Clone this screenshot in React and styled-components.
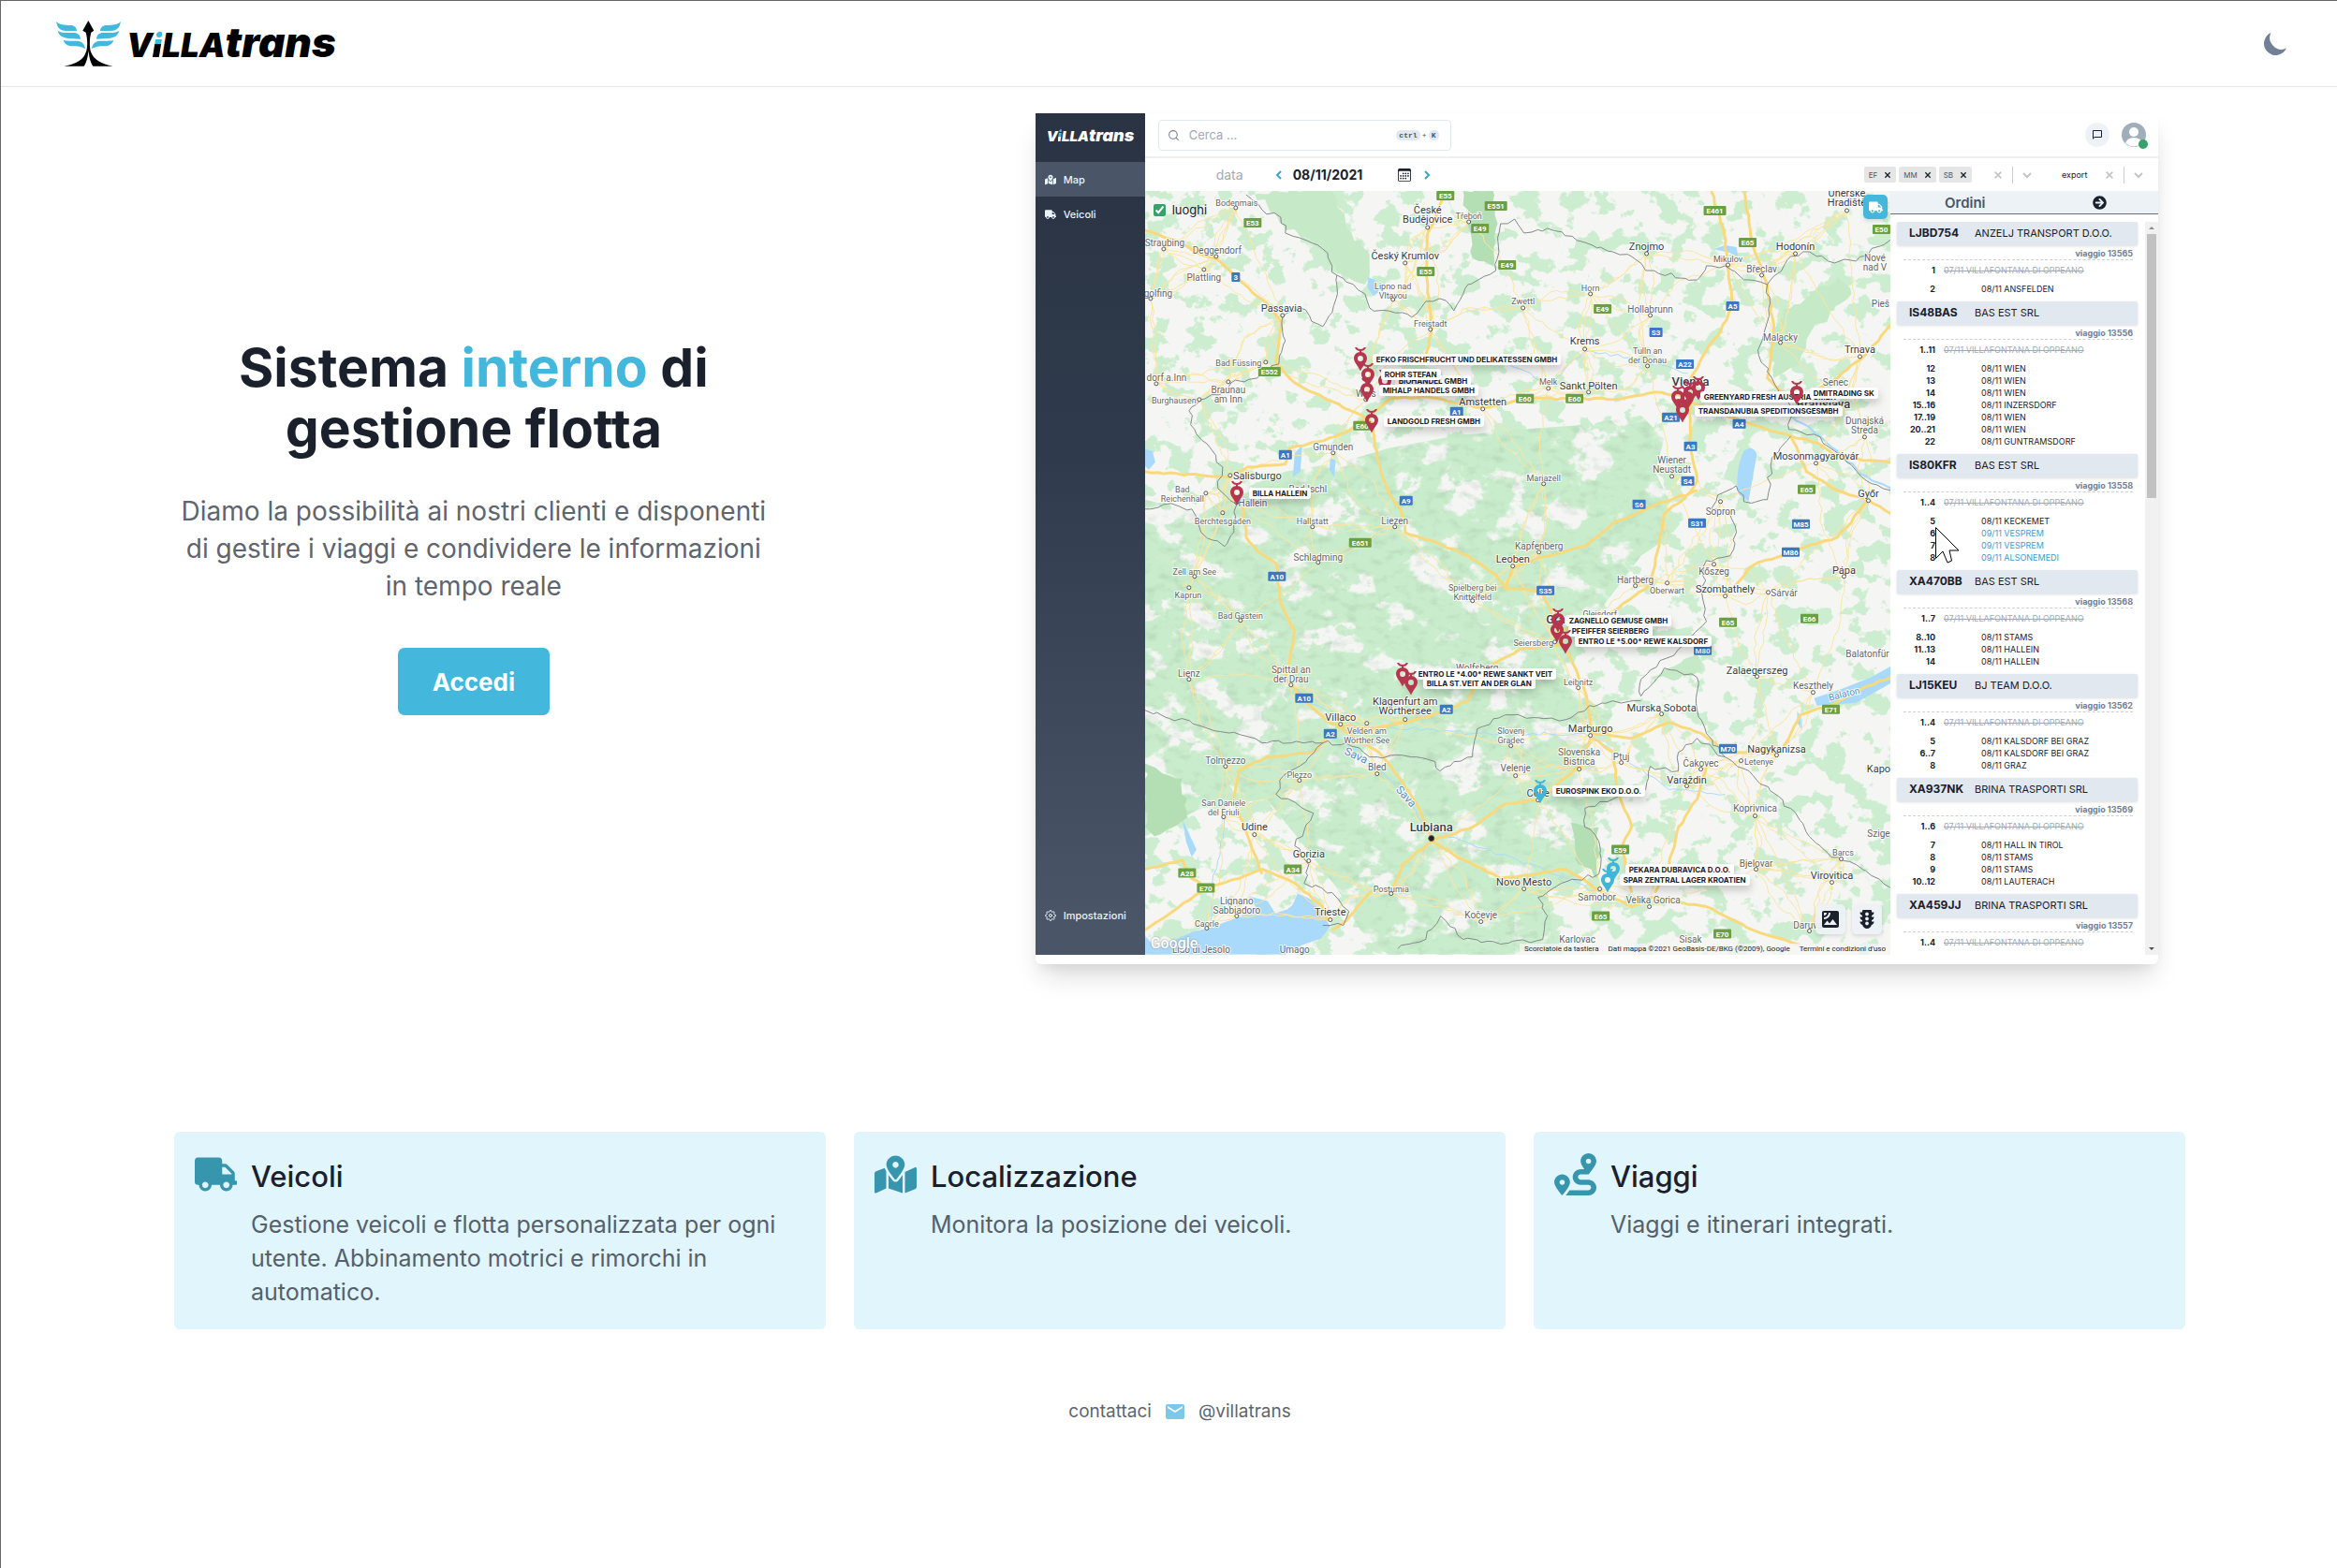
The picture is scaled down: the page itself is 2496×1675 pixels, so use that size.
import React from "react";
import styled, { createGlobalStyle } from "styled-components";
import { FaTruck, FaMapMarkedAlt, FaRoute, FaArrowCircleRight, FaTrafficLight } from "react-icons/fa";
import { FiSearch, FiSettings } from "react-icons/fi";
import { MdEmail, MdSatellite, MdChatBubbleOutline } from "react-icons/md";
import { BsCalendar3 } from "react-icons/bs";

const ink = "#1a202c";
const slate = "#4a5568";
const sky = "#43b8dc";
const teal = "#3796ae";
const line = "#e2e8f0";
const mist = "#edf2f7";

const GlobalStyle = createGlobalStyle`
  *, *::before, *::after { box-sizing: border-box; }
  body { margin: 0; background: #fff; color: ${ink}; font-family: Inter, "Noto Sans", sans-serif; }
  h1, h2, p, ul, ol { margin: 0; padding: 0; }
  ul, ol { list-style: none; }
  button, input, select { font: inherit; color: inherit; border: 0; margin: 0; padding: 0; background: none; }
  a { color: inherit; text-decoration: none; }
  svg { display: block; }
`;

const Page = styled.div`
  min-height: 100vh;
  border-top: 1px solid #666;
  border-left: 1px solid #666;
`;

const Header = styled.header`
  display: flex;
  align-items: center;
  justify-content: space-between;
  height: 92px;
  padding: 0 54px 0 59px;
  border-bottom: 1px solid ${line};
`;

const Brand = styled.a`
  display: flex;
  align-items: center;
  gap: 6px;
`;

const Wordmark = styled.span`
  display: inline-flex;
  align-items: baseline;
  color: ${(p) => (p.$light ? "#fff" : "#000")};
  font-size: ${(p) => (p.$light ? 15 : 35)}px;
  line-height: ${(p) => (p.$light ? 20 : 48)}px;
  font-weight: 900;
  font-style: italic;
`;

const WordTail = styled.span`
  font-size: ${(p) => (p.$light ? 18 : 44)}px;
`;

const DottedI = styled.span`
  background: linear-gradient(${sky} 48%, ${(p) => (p.$light ? "#fff" : "#000")} 48%);
  background-clip: text;
  color: transparent;
`;

const IconButton = styled.button`
  display: grid;
  place-items: center;
  min-width: ${(p) => p.$size || 14}px;
  height: ${(p) => p.$size || 14}px;
  color: ${(p) => p.$color || "#718096"};
  cursor: pointer;
`;

const Hero = styled.section`
  display: grid;
  grid-template-columns: minmax(0, 8fr) minmax(0, 15fr);
  column-gap: 280px;
  align-items: center;
  padding: 28px 191px 0 185px;
`;

const Pitch = styled.div`
  display: flex;
  flex-direction: column;
  align-items: center;
  padding-bottom: 26px;
  text-align: center;
`;

const Title = styled.h1`
  font-size: 57px;
  line-height: 65px;
  font-weight: 700;
  white-space: nowrap;
`;

const Accent = styled.span`
  color: ${sky};
`;

const Lead = styled.p`
  margin: 36px 0 46px;
  color: #5f646d;
  font-size: 28px;
  line-height: 40px;
  white-space: nowrap;
`;

const LoginButton = styled.button`
  height: 72px;
  padding: 0 37px;
  border-radius: 7px;
  background: ${sky};
  color: #fff;
  font-size: 26px;
  font-weight: 700;
  cursor: pointer;
`;

const Shot = styled.div`
  padding-bottom: 10px;
  border-radius: 6px;
  background: #fff;
  box-shadow: 0 18px 28px -6px rgba(0, 0, 0, 0.14), 0 6px 14px -4px rgba(0, 0, 0, 0.08);
`;

const AppFrame = styled.div`
  position: relative;
  display: grid;
  grid-template-columns: 117px minmax(0, 1fr);
  aspect-ratio: 1200 / 899;
  overflow: hidden;
`;

const Sidebar = styled.nav`
  display: flex;
  flex-direction: column;
  padding-bottom: 23px;
  background: linear-gradient(#2a3344, #2f3b4c 40%, #4a5568 96%);
  color: #e8f3f8;
`;

const SideLogo = styled.div`
  height: 52px;
  padding: 14px 0 0 12px;
`;

const SideLink = styled.a`
  display: flex;
  align-items: center;
  gap: 8px;
  height: 37px;
  padding-left: 10px;
  background: ${(p) => (p.$active ? slate : "transparent")};
  font-size: 11px;
  font-weight: 500;
  margin-top: ${(p) => (p.$last ? "auto" : 0)};
`;

const Main = styled.div`
  display: flex;
  flex-direction: column;
  min-width: 0;
  min-height: 0;
`;

const TopBar = styled.div`
  display: flex;
  align-items: center;
  justify-content: space-between;
  height: 48px;
  padding: 0 13px 0 14px;
  border-bottom: 2px solid #f0f0f1;
`;

const SearchBox = styled.label`
  display: flex;
  align-items: center;
  gap: 10px;
  width: 313px;
  height: 33px;
  padding: 0 12px 0 9px;
  border: 1px solid ${line};
  border-radius: 4px;
  color: #7b8190;
`;

const SearchInput = styled.input`
  flex: 1;
  min-width: 0;
  font-size: 13px;
  outline: 0;
  &::placeholder { color: #a3a9b4; opacity: 1; }
`;

const Keys = styled.span`
  display: flex;
  align-items: center;
  gap: 2px;
  color: ${slate};
  font-size: 8px;
`;

const Key = styled.kbd`
  padding: 0 3px;
  border-radius: 5px;
  background: ${line};
  font: 700 8px/11px "Liberation Mono", monospace;
`;

const UserTools = styled.div`
  display: flex;
  gap: 13px;
`;

const ChatButton = styled(IconButton)`
  border-radius: 50%;
  background: ${mist};
`;

const Avatar = styled.button`
  position: relative;
  width: 26px;
  height: 26px;
`;

const Status = styled.span`
  position: absolute;
  right: -2px;
  bottom: -2px;
  width: 10px;
  height: 10px;
  border-radius: 50%;
  background: #38a169;
`;

const Filters = styled.div`
  display: flex;
  align-items: center;
  justify-content: space-between;
  height: 35px;
  padding: 0 14px 0 76px;
`;

const DatePicker = styled.div`
  display: grid;
  grid-template-columns: 52px 14px 104px 16px 14px;
  align-items: center;
  column-gap: 8px;
`;

const DateLabel = styled.label`
  color: #a3a9b4;
  font-size: 14px;
`;

const DateInput = styled.input`
  width: 100%;
  font-size: 14px;
  font-weight: 700;
`;

const Selection = styled.div`
  display: flex;
  align-items: center;
  gap: 8px;
`;

const Tags = styled.div`
  display: flex;
  gap: 3px;
  margin-right: 13px;
`;

const Tag = styled.span`
  display: flex;
  align-items: center;
  gap: 6px;
  height: 17px;
  padding: 0 4px 0 5px;
  border-radius: 2px;
  background: #e6e6e6;
  color: ${slate};
  font-size: 8px;
`;

const Divider = styled.span`
  width: 1px;
  height: 18px;
  background: #ccc;
`;

const ExportSelect = styled.select`
  width: 36px;
  margin-left: 22px;
  appearance: none;
  font-size: 9px;
`;

const Workspace = styled.div`
  display: grid;
  grid-template-columns: minmax(0, 1fr) 286px;
  flex: 1;
  min-height: 0;
`;

const MapPanel = styled.div`
  position: relative;
  min-width: 0;
  overflow: hidden;
  background: #f5f5f3;
`;

const MapDrawing = styled.svg`
  width: 100%;
  height: 100%;
`;

const PlacesToggle = styled.label`
  position: absolute;
  left: 9px;
  top: 11px;
  display: flex;
  align-items: center;
  gap: 7px;
  font-size: 13px;
  line-height: 18px;
`;

const Tick = styled.input`
  width: 13px;
  height: 13px;
  accent-color: #38a169;
`;

const MapButton = styled.button`
  position: absolute;
  right: ${(p) => p.$right}px;
  ${(p) => (p.$bottom ? `bottom: ${p.$bottom}px;` : "top: 4px;")}
  display: grid;
  place-items: center;
  width: ${(p) => p.$size}px;
  height: ${(p) => p.$size}px;
  border-radius: 5px;
  background: ${(p) => (p.$solid ? sky : "rgba(237, 242, 247, 0.9)")};
  color: ${(p) => (p.$solid ? "#fff" : ink)};
  box-shadow: 0 2px 4px rgba(0, 0, 0, 0.12);
`;

const Marker = styled.div`
  position: absolute;
  left: ${(p) => p.$x - 9}px;
  top: ${(p) => p.$y - 12}px;
  color: ${(p) => (p.$blue ? "#3fb5d8" : "#b5364d")};
`;

const MarkerLabel = styled.span`
  position: absolute;
  left: ${(p) => p.$x - 4}px;
  top: ${(p) => p.$y - 6}px;
  padding: 0 4px;
  border-radius: 3px;
  background: #fff;
  box-shadow: 1px 5px 8px rgba(0, 0, 0, 0.18);
  font-size: 8px;
  line-height: 12px;
  font-weight: 700;
  white-space: nowrap;
`;

const MapCredits = styled.div`
  position: absolute;
  right: 0;
  bottom: 0;
  display: flex;
  gap: 10px;
  padding: 0 5px;
  background: rgba(245, 245, 245, 0.75);
  color: #222;
  font: 8px/12px Roboto, sans-serif;
  white-space: nowrap;
`;

const GoogleMark = styled.span`
  position: absolute;
  left: 6px;
  bottom: 2px;
  color: #fff;
  font: 500 16px/20px Roboto, sans-serif;
  text-shadow: 0 0 2px #777;
`;

const Orders = styled.aside`
  display: flex;
  flex-direction: column;
  min-height: 0;
  background: #fff;
`;

const OrdersHead = styled.div`
  display: flex;
  align-items: center;
  justify-content: space-between;
  height: 25px;
  padding: 0 55px 0 58px;
  border-bottom: 1px solid #6b6f76;
  background: ${mist};
  color: ${slate};
  font-size: 15px;
  font-weight: 600;
`;

const OrdersBody = styled.div`
  display: flex;
  justify-content: space-between;
  flex: 1;
  min-height: 0;
  padding-top: 8px;
`;

const OrderList = styled.ul`
  flex: 1;
  min-width: 0;
  padding: 0 8px 0 7px;
  overflow: hidden;
`;

const Order = styled.li`
  padding-bottom: 7px;
`;

const OrderTitle = styled.div`
  display: grid;
  grid-template-columns: 70px 1fr;
  height: 25px;
  padding-left: 13px;
  border-radius: 2px;
  background: ${line};
  box-shadow: 0 1px 3px rgba(0, 0, 0, 0.14);
  font-size: 11px;
  line-height: 24px;
`;

const Plate = styled.b`
  font-size: 12px;
`;

const Trip = styled.p`
  height: 16px;
  margin: 0 5px 4px 7px;
  border-bottom: 1px dashed #cbd0d6;
  color: #718096;
  font-size: 9px;
  line-height: 17px;
  font-weight: 700;
  text-align: right;
`;

const Stop = styled.div`
  display: grid;
  grid-template-columns: 41px 1fr;
  column-gap: ${(p) => (p.$done ? 9 : 49)}px;
  margin-bottom: ${(p) => (p.$done ? 7 : 0)}px;
  color: ${(p) => (p.$done ? "#a0aab4" : p.$late ? "#4299cd" : ink)};
  font-size: 9px;
  line-height: 13px;
  white-space: nowrap;
`;

const StopNumber = styled.b`
  color: ${ink};
  text-align: right;
`;

const StopPlace = styled.span`
  text-decoration: ${(p) => (p.$done ? "line-through" : "none")};
`;

const ScrollTrack = styled.div`
  display: flex;
  flex-direction: column;
  align-items: center;
  justify-content: space-between;
  width: 14px;
  padding: 5px 0;
  background: #f1f1f1;
`;

const ScrollThumb = styled.div`
  width: 10px;
  height: 282px;
  margin: 5px 0 auto;
  background: #c1c1c1;
`;

const ScrollArrow = styled.span`
  border: 3px solid transparent;
  border-bottom: ${(p) => (p.$down ? "0" : "3px solid #8a8a8a")};
  border-top: ${(p) => (p.$down ? "3px solid #505050" : "0")};
`;

const Pointer = styled.svg`
  position: absolute;
  left: 960px;
  top: 441px;
`;

const Features = styled.section`
  display: grid;
  grid-template-columns: repeat(3, minmax(0, 1fr));
  gap: 30px;
  padding: 179px 162px 0 185px;
`;

const Card = styled.article`
  display: grid;
  grid-template-columns: 45px minmax(0, 1fr);
  column-gap: 15px;
  align-items: start;
  padding: 23px 22px 22px;
  border-radius: 6px;
  background: #e1f5fc;
  color: ${teal};
`;

const CardTitle = styled.h2`
  color: ${ink};
  font-size: 31px;
  line-height: 50px;
  font-weight: 500;
`;

const CardText = styled.p`
  margin-top: 8px;
  color: #55606c;
  font-size: 25px;
  line-height: 36px;
`;

const Footer = styled.footer`
  display: flex;
  align-items: center;
  justify-content: center;
  gap: 13px;
  padding: 76px 162px 40px 185px;
  color: #60656d;
  font-size: 19px;
  line-height: 24px;
`;

/* ---------- logo ---------- */

const feathers = [
  "M180 68C190 78 205 80 225 80C238 80 246 88 246 98L212 98C195 98 184 90 180 68Z",
  "M185 97C195 105 215 104 235 104C250 104 257 112 258 124L222 122C200 121 188 112 185 97Z",
  "M203 127C212 131 230 129 248 130C264 132 272 142 273 156C262 148 250 147 232 147C215 146 206 138 203 127Z",
];

function Emblem() {
  return (
    <svg width="69" height="49" viewBox="180 65 207 147" aria-hidden="true">
      <g fill={sky}>
        {feathers.map((d) => <path key={d} d={d} />)}
        <g transform="translate(567 0) scale(-1 1)">{feathers.map((d) => <path key={d} d={d} />)}</g>
      </g>
      <path d="M283 65L301 97L292 103C286 125 287 150 291 165C300 190 325 205 362 211L298 211C290 200 285 180 283.500 160C282 180 277 200 269 211L205 211C245 205 268 190 276 165C281 150 281 125 275 103L265 97Z" fill="#000" />
    </svg>
  );
}

function Logotype({ light }) {
  return (
    <Wordmark $light={light}>
      V<DottedI $light={light}>i</DottedI>LLA<WordTail $light={light}>trans</WordTail>
    </Wordmark>
  );
}

/* ---------- map data ---------- */

// [lines, x, y of the first line, size, dot x, dot y]
const towns = [
  ["Bodenmais", 98, 12, 9, 97, 18], ["Straubing", 21, 55, 10, 20, 62], ["Deggendorf", 77, 63, 10, 76, 70],
  ["Plattling", 63, 92, 10, 63, 84], ["golfing", 14, 109, 10, 6, 115], ["Passavia", 146, 125, 11, 147, 133],
  ["České|Budějovice", 302, 20, 11, 302, 39], ["Třeboň", 346, 26, 9, 346, 33], ["Český Krumlov", 278, 69, 11, 278, 77],
  ["Lipno nad|Vltavou", 265, 101, 9, 265, 116], ["Freistadt", 305, 141, 9, 305, 148], ["Zwettl", 404, 117, 9, 404, 125],
  ["Horn", 476, 103, 9, 476, 110], ["Znojmo", 536, 59, 11, 536, 67], ["Mikulov", 623, 72, 9, 623, 79],
  ["Hodonín", 695, 59, 11, 695, 67], ["Břeclav", 659, 83, 10, 659, 90], ["Uherské|Hradiště", 750, 2, 11, 750, 21],
  ["Nové|nad V", 780, 71, 10], ["Pieš", 786, 120, 10], ["Hollabrunn", 540, 126, 10, 540, 133],
  ["Krems", 470, 160, 11, 470, 169], ["Tulln an|der Donau", 537, 170, 9, 537, 187], ["Malacky", 679, 156, 10, 679, 162],
  ["Trnava", 764, 169, 11, 764, 177], ["Senec", 738, 204, 10], ["Bad Füssing", 100, 183, 9, 129, 183],
  ["dorf a.Inn", 23, 199, 10, 12, 206], ["Braunau|am Inn", 89, 212, 10, 89, 204], ["Burghausen", 31, 223, 9, 58, 223],
  ["Wels", 236, 216, 10, 236, 223], ["Melk", 431, 203, 9, 431, 211], ["Sankt Pölten", 474, 208, 11, 474, 215],
  ["Amstetten", 361, 225, 11, 361, 233], ["Vienna", 583, 204, 13], ["Bratislava", 725, 228, 13],
  ["Dunajská|Streda", 769, 245, 10, 769, 263], ["Gmunden", 201, 273, 10, 201, 280], ["Salisburgo", 120, 304, 11, 91, 304],
  ["Bad|Reichenhall", 40, 318, 9, 65, 323], ["Hallein", 115, 333, 10, 98, 333], ["Bad Ischl", 174, 318, 10],
  ["Berchtesgaden", 83, 352, 9, 83, 344], ["Hallstatt", 179, 352, 9, 179, 359], ["Liezen", 267, 352, 10, 267, 359],
  ["Mariazell", 426, 306, 9, 426, 313], ["Wiener|Neustadt", 563, 287, 10, 563, 305], ["Mosonmagyaróvár", 717, 283, 11, 717, 291],
  ["Győr", 773, 323, 11, 773, 331], ["Sopron", 615, 342, 10, 615, 332], ["Kapfenberg", 421, 379, 10, 421, 386],
  ["Leoben", 393, 393, 11, 393, 401], ["Schladming", 185, 391, 10, 185, 397], ["Zell am See", 53, 406, 9, 53, 412],
  ["Kőszeg", 608, 406, 10, 608, 399], ["Pápa", 747, 405, 11, 747, 412], ["Hartberg", 524, 415, 10, 524, 422],
  ["Kaprun", 46, 431, 9, 47, 424], ["Bad Gastein", 102, 453, 9, 102, 459], ["Spielberg bei|Knittelfeld", 350, 423, 9, 350, 438],
  ["Oberwart", 558, 426, 9, 558, 419], ["Szombathely", 620, 425, 11, 620, 433], ["Sárvár", 683, 429, 10, 666, 429],
  ["Gleisdorf", 486, 451, 9], ["Graz", 442, 458, 13], ["Seiersberg", 415, 482, 9, 438, 482], ["Balatonfür", 772, 494, 10],
  ["Lienz", 47, 515, 10, 47, 522], ["Spittal an|der Drau", 156, 511, 10, 156, 528], ["Wolfsberg", 355, 509, 10],
  ["Leibnitz", 463, 524, 9, 463, 531], ["Zalaegerszeg", 654, 512, 11, 654, 519], ["Keszthely", 714, 528, 10, 714, 536],
  ["Klagenfurt am|Wörthersee", 278, 545, 11, 278, 565], ["Villaco", 209, 562, 11, 209, 570],
  ["Velden am|Wörther See", 237, 576, 9, 237, 569], ["Murska Sobota", 552, 552, 11, 552, 559], ["Marburgo", 476, 574, 11, 476, 582],
  ["Slovenj|Gradec", 391, 576, 9, 391, 593], ["Slovenska|Bistrica", 464, 599, 10, 464, 618], ["Ptuj", 509, 604, 10, 509, 611],
  ["Čakovec", 594, 611, 10, 594, 618], ["Nagykanizsa", 675, 596, 11, 675, 603], ["Letenye", 656, 609, 9, 637, 609],
  ["Tolmezzo", 86, 608, 10, 86, 615], ["Bled", 248, 615, 10, 248, 623], ["Plezzo", 165, 623, 9, 165, 630],
  ["Velenje", 396, 616, 10, 396, 625], ["Varaždin", 579, 629, 11, 579, 636], ["Kapo", 784, 617, 11],
  ["San Daniele|del Friuli", 84, 653, 9, 84, 669], ["Celje", 420, 643, 11, 420, 651], ["Koprivnica", 652, 659, 10, 652, 668],
  ["Udine", 117, 679, 11, 117, 688], ["Lubiana", 306, 680, 13, 306, 692], ["Szige", 784, 686, 10],
  ["Gorizia", 175, 708, 11, 175, 716], ["Barcs", 746, 706, 9, 744, 714], ["Bjelovar", 653, 718, 10, 653, 725],
  ["Virovitica", 734, 731, 11, 734, 739], ["Novo Mesto", 405, 738, 11, 405, 746], ["Postumia", 263, 745, 9, 263, 751],
  ["Lignano|Sabbiadoro", 98, 758, 10, 98, 775], ["Trieste", 198, 770, 11, 198, 779], ["Samobor", 483, 754, 10, 486, 746],
  ["Velika Gorica", 543, 757, 10, 539, 765], ["Caorle", 66, 782, 9, 66, 788], ["Kočevje", 359, 773, 10, 359, 781],
  ["Daruvar", 710, 784, 10, 710, 791], ["Karlovac", 462, 799, 10], ["Sisak", 583, 799, 10], ["Umago", 160, 810, 10],
  ["Lido di Jesolo", 60, 810, 10],
];

const greenSigns = [
  ["E55", 321, 5], ["E551", 375, 16], ["E53", 115, 34], ["E49", 358, 40], ["E55", 300, 86], ["E49", 387, 79], ["E49", 489, 126],
  ["E461", 609, 21], ["E65", 644, 55], ["E50", 787, 41], ["E552", 133, 193], ["E60", 232, 251], ["E60", 406, 222], ["E60", 459, 222],
  ["E65", 707, 319], ["E651", 230, 376], ["E65", 623, 461], ["E66", 710, 457], ["E71", 733, 554], ["E59", 508, 704],
  ["A28", 45, 729], ["A34", 158, 725], ["E70", 65, 745], ["E65", 487, 775], ["E70", 617, 794],
];

const blueSigns = [
  ["3", 97, 92], ["A5", 628, 123], ["S3", 546, 151], ["A22", 577, 185], ["A1", 333, 236], ["A1", 150, 282], ["A21", 562, 242],
  ["A4", 635, 249], ["A3", 583, 273], ["S4", 580, 310], ["S6", 528, 335], ["S31", 590, 355], ["M85", 701, 356], ["M86", 690, 386],
  ["A9", 279, 331], ["A10", 141, 412], ["S35", 428, 427], ["M80", 596, 491], ["A10", 170, 542], ["A2", 322, 554], ["A2", 198, 580],
  ["M70", 623, 596],
];

const highways = [
  "0,42 30,52 60,68 76,72 100,95 130,120 146,140 143,160 140,185 160,205 200,225 232,240 243,248 245,265 252,300 262,325 275,345 278,365 310,375 345,390 375,410 385,425",
  "0,300 60,304 90,306 110,295 150,292 155,275 185,268 215,258 240,240 262,222 300,220 340,228 362,232 406,222 459,222 510,222 545,215 575,220",
  "583,200 600,170 615,150 628,123 625,100 618,40 605,0",
  "583,225 583,273 590,310 575,330 555,345 545,400 540,420 500,450 445,470",
  "583,225 620,240 650,250 690,262 720,270 740,285 797,290",
  "590,320 540,338 500,355 470,380 420,392 393,403 385,425 405,425 425,430 435,455 445,480 460,510 472,540 477,580",
  "95,330 105,340 108,370 120,385 140,398 145,440 160,470 155,500 150,520 170,545 200,570",
  "200,570 240,575 280,568 322,556 345,545 365,510 400,490 445,485",
  "477,580 465,615 445,630 425,650 385,655 350,680 320,690 306,695",
  "306,690 290,655 270,625 250,600 205,572",
  "198,580 180,600 130,605 100,620 95,650 110,690 125,730",
  "0,725 40,715 50,735 65,745 100,735 125,725 160,740 190,765 195,780",
  "0,790 30,770 65,745",
  "306,695 275,720 265,745 240,750 215,780 200,790",
  "306,695 340,715 380,735 420,730 450,725 480,745 520,765 540,755",
  "540,755 600,765 650,790 700,806",
  "520,750 510,700 520,680 505,640 500,600 478,585",
  "478,580 520,585 560,568 595,580 625,600 680,600 700,560 733,550 760,535 797,520",
  "600,615 590,650 570,680 560,720 545,750",
  "320,0 310,30 302,45 300,86 306,145 300,180",
  "640,0 650,60 665,100 672,150 665,200 690,225",
  "800,140 770,175 740,200 700,222",
  "690,262 707,300 740,320 773,331 797,345",
  "773,331 740,370 690,386 650,400 620,433",
];

const borders = [
  "108,4 125,20 145,28 150,45 165,50 190,62 205,90 205,100 200,130 190,145 165,125 147,135 150,160 143,185 120,200 92,205 85,215 60,223 47,235 55,260 70,275 83,295 78,318 98,335 95,365 85,380 60,365 50,340 20,335 0,340",
  "205,90 235,110 240,125 275,130 285,135 300,118 315,115 330,128 345,100 375,85 380,35 395,30 405,45 430,40 470,55 500,65 520,70 535,85 590,95 600,80 620,80 640,95 665,100 668,120 662,150 655,170 670,200 690,230 688,255",
  "665,100 690,70 710,65 730,75 760,75 797,52",
  "688,255 715,260 740,280 765,305 797,320",
  "690,262 670,285 665,330 640,332 632,315 612,325 605,340 625,345 632,365 625,390 600,395 595,430 600,460 585,475 570,490 540,512 530,522",
  "0,555 60,572 130,590 190,590 215,590 240,605 290,605 310,610 315,620 330,610 350,605 355,575 385,560 450,565 475,550 500,545 530,545",
  "530,522 530,540 555,510 590,520 590,555 600,580 620,605 650,625 690,660 710,690 730,708 760,720 797,745",
  "620,605 590,585 570,600 570,620 540,615 535,640 500,650 470,660 470,680 485,695 485,730 445,740 420,755 430,775 425,800 380,805 340,800 316,775 300,800 270,810",
  "190,590 172,610 148,625 140,645 180,665 160,700 175,720 170,740 200,750 218,770 212,785 190,785",
];

// Markers that sit under the label of a neighbour.
const coveredMarkers = [[257, 203], [592, 210]];

const markers = [
  [231, 179], [239, 196], [238, 212], [243, 245], [99, 322], [583, 215], [580, 221], [570, 220], [575, 234],
  [697, 215], [442, 458], [441, 469], [450, 481], [276, 516], [285, 525], [423, 641, true], [501, 724, true], [495, 736, true],
];

const markerLabels = [
  ["EFKO FRISCHFRUCHT UND DELIKATESSEN GMBH", 247, 180], ["BIOHANDEL GMBH", 271, 203], ["ROHR STEFAN", 256, 196],
  ["MIHALP HANDELS GMBH", 254, 213], ["LANDGOLD FRESH GMBH", 259, 246], ["BILLA HALLEIN", 115, 323],
  ["GREENYARD FRESH AUSTRIA GMBH", 597, 220], ["TRANSDANUBIA SPEDITIONSGESMBH", 591, 235], ["DMITRADING SK", 714, 216],
  ["ZAGNELLO GEMUSE GMBH", 453, 459], ["PFEIFFER SEIERBERG", 456, 470], ["ENTRO LE *5.00* REWE KALSDORF", 463, 481],
  ["ENTRO LE *4.00* REWE SANKT VEIT", 292, 516], ["BILLA ST.VEIT AN DER GLAN", 301, 526],
  ["EUROSPINK EKO D.O.O.", 439, 641], ["PEKARA DUBRAVICA D.O.O.", 517, 725], ["SPAR ZENTRAL LAGER KROATIEN", 511, 736],
];

// Deterministic jitter, so that roads and borders wander the same way on every draw.
function noise(n) {
  const v = Math.sin(n * 127.1) * 43758.5453;
  return v - Math.floor(v) - 0.5;
}

function wander(points, amount) {
  const p = points.split(" ").map((s) => s.split(",").map(Number));
  let d = `M${p[0]}`;
  for (let i = 1; i < p.length; i++) {
    const [ax, ay] = p[i - 1];
    const [bx, by] = p[i];
    const steps = Math.max(2, Math.round(Math.hypot(bx - ax, by - ay) / 7));
    for (let s = 1; s < steps; s++) {
      const t = s / steps;
      const k = ax * 3 + by * 7 + s;
      d += `L${(ax + (bx - ax) * t + noise(k) * amount).toFixed(1)},${(ay + (by - ay) * t + noise(k + 50) * amount).toFixed(1)}`;
    }
    d += `L${bx},${by}`;
  }
  return d;
}

function localRoads() {
  const dots = towns.filter((t) => t[4] !== undefined).map((t) => [t[4], t[5]]);
  const roads = [];
  dots.forEach(([x, y], i) => {
    dots
      .map(([a, b], j) => [Math.hypot(a - x, b - y), a, b, j])
      .filter((r) => r[3] !== i)
      .sort((m, n) => m[0] - n[0])
      .slice(0, 4)
      .forEach(([, a, b]) => {
        const mx = (x + a) / 2 + noise(x + b) * 24;
        const my = (y + b) / 2 + noise(y + a) * 24;
        roads.push(wander(`${x},${y} ${mx},${my} ${a},${b}`, 4));
      });
  });
  return roads.join("");
}

const alps = "M0,330L60,345L100,320L150,300L210,290L260,275L330,262L400,255L470,250L530,240L555,265L545,300L560,330L560,370L530,390L500,430L470,470L450,530L500,560L470,600L500,640L470,680L480,720L430,750L440,816L260,816L230,790L205,745L170,700L130,650L60,660L0,690Z";

function Sign({ text, x, y, color }) {
  const w = text.length * 5 + 4;
  return (
    <g>
      <rect x={x - w / 2} y={y - 5} width={w} height="10" rx="1" fill={color} />
      <text x={x} y={y + 3} fill="#fff" fontSize="8" fontWeight="700" textAnchor="middle">{text}</text>
    </g>
  );
}

function MapTerrain() {
  return (
    <MapDrawing viewBox="0 0 797 816" preserveAspectRatio="xMidYMid slice" fontFamily="Roboto, sans-serif" aria-label="Mappa">
      <defs>
        <filter id="woods" x="0" y="0" width="100%" height="100%" colorInterpolationFilters="sRGB">
          <feTurbulence type="fractalNoise" baseFrequency="0.04 0.045" numOctaves="5" seed="7" />
          <feColorMatrix values="0 0 0 0 0.80  0 0 0 0 0.93  0 0 0 0 0.81  18 0 0 0 -9.7" />
        </filter>
        <filter id="forest" x="0" y="0" width="100%" height="100%" colorInterpolationFilters="sRGB">
          <feTurbulence type="fractalNoise" baseFrequency="0.022 0.03" numOctaves="5" seed="21" />
          <feColorMatrix values="0 0 0 0 0.79  0 0 0 0 0.93  0 0 0 0 0.80  12 0 0 0 -4.6" />
        </filter>
        <filter id="relief" x="0" y="0" width="100%" height="100%" colorInterpolationFilters="sRGB">
          <feTurbulence type="fractalNoise" baseFrequency="0.07 0.1" numOctaves="4" seed="3" />
          <feColorMatrix values="0 0 0 0 0.5  0 0 0 0 0.6  0 0 0 0 0.53  0 2.6 0 0 -1.3" />
        </filter>
        <clipPath id="alps"><path d={alps} /></clipPath>
      </defs>
      <rect width="797" height="816" fill="#f5f6f4" />
      <rect width="797" height="816" filter="url(#woods)" />
      <g clipPath="url(#alps)">
        <rect width="797" height="816" filter="url(#forest)" />
        <rect width="797" height="816" filter="url(#relief)" opacity="0.2" />
      </g>
      <g fill="#c6e9c8">
        <path d={wander("110,0 200,0 215,40 240,70 235,100 205,88 190,60 150,42 140,25 110,0", 8)} />
        <path d={wander("340,0 372,0 375,40 372,80 350,72 346,40 340,0", 5)} fill="#b4dfb5" />
        <path d={wander("672,200 664,160 690,125 740,92 755,110 715,145 700,180 672,200", 8)} />
        <path d={wander("0,612 40,628 45,670 10,690 0,680 0,612", 6)} fill="#b4dfb5" />
        <path d={wander("540,520 590,495 596,512 570,522 540,520", 5)} />
        <path d={wander("455,675 485,680 485,735 460,715 455,675", 5)} fill="#b4dfb5" />
      </g>
      <g fill="#a9dafc">
        <path d="M0,796L12,810L35,799L50,792L68,788L101,776L120,768L111,754L131,759L139,772L152,768L158,763L163,751L175,756L185,766L198,786L188,799L168,806L151,816L0,816Z" />
        <path d="M640,278Q650,270 654,282Q650,302 645,332L634,324Q630,300 640,278Z" />
        <path d="M715,542L745,532L775,520L797,508L797,526L760,547L718,550Z" />
        <path d="M238,92L246,95L250,108L244,112L238,104Z" />
        <path d="M160,280L168,272L166,300L158,306Z" />
        <path d="M198,285L204,288L202,306L197,298Z" />
        <path d="M0,276L8,278L11,290L4,298L0,294Z" />
        <path d="M40,672L55,704L50,712L44,696Z" />
        <path d="M697,556L702,564L702,576L697,568Z" />
        <path d="M608,62L620,58L632,60L634,70L625,66Z" />
      </g>
      <g fill="none" stroke="#a9dafc" strokeWidth="2">
        <path d={wander("690,240 715,258 740,278 765,303 797,318", 3)} />
        <path d={wander("370,175 430,205 470,172 520,178 580,195", 4)} strokeWidth="1" />
        <path d={wander("215,590 250,618 275,640 300,680 370,705 450,735 520,765", 4)} strokeWidth="1" />
        <path d={wander("85,670 80,710 72,740 70,790", 3)} strokeWidth="1" />
        <path d={wander("156,525 172,545 240,573 300,575 350,580 470,580 560,640 620,645", 4)} strokeWidth="1" />
      </g>
      <path d={localRoads()} fill="none" stroke="#fbe5a0" strokeWidth="1" />
      <g fill="none" stroke="#fad97c" strokeWidth="3" strokeLinejoin="round">
        {highways.map((h) => <path key={h} d={wander(h, 2)} />)}
      </g>
      <g fill="none" stroke="#85898a" strokeWidth="1">
        {borders.map((b) => <path key={b} d={wander(b, 5)} />)}
      </g>
      {greenSigns.map(([t, x, y]) => <Sign key={t + x} text={t} x={x} y={y} color="#6b9f44" />)}
      {blueSigns.map(([t, x, y]) => <Sign key={t + x} text={t} x={x} y={y} color="#3a78c3" />)}
      <g textAnchor="middle" stroke="#fff" strokeWidth="2" strokeOpacity="0.85" paintOrder="stroke">
        {towns.map(([name, x, y, size]) =>
          name.split("|").map((part, i) => (
            <text key={part + x} x={x} y={y + 4 + i * 10} fontSize={size} fontWeight={size === 13 ? 500 : 400} fill={size > 10 ? "#3c3c3c" : "#666"}>
              {part}
            </text>
          ))
        )}
        <g fill="#5b8fc7" fontSize="10">
          <text x="748" y="541" transform="rotate(-14 748 541)">Balaton</text>
          <text x="224" y="607" transform="rotate(25 224 607)" fontSize="12">Sava</text>
          <text x="276" y="650" transform="rotate(48 276 650)" fontSize="12">Sava</text>
        </g>
      </g>
      <g fill="#fff" stroke="#555" strokeWidth="1">
        {towns.filter((t) => t[4] !== undefined).map(([name, , , size, x, y]) => (
          <circle key={name} cx={x} cy={y} r={size === 13 ? 3 : 2} fill={size === 13 ? "#222" : "#fff"} />
        ))}
      </g>
    </MapDrawing>
  );
}

function PinShape() {
  return (
    <svg width="16" height="26" viewBox="0 0 16 26" aria-hidden="true">
      <path fill="currentColor" fillRule="evenodd" d="M8 5C3.800 5 1 8 1 11.800C1 16 5.500 20 8 25.500C10.500 20 15 16 15 11.800C15 8 12.200 5 8 5ZM8 9A3 3 0 1 1 8 15A3 3 0 0 1 8 9Z" />
      <path d="M3 0Q4 3 8 3Q12 3 13 0M8 3V6" fill="none" stroke="currentColor" strokeWidth="2" />
    </svg>
  );
}

function Stroke({ d, size = 12 }) {
  return (
    <svg width={size} height={size} viewBox="0 0 12 12" fill="none" stroke="currentColor" strokeWidth="2" aria-hidden="true">
      <path d={d} />
    </svg>
  );
}

const crossPath = "M2 2L10 10M10 2L2 10";

function Moon() {
  return (
    <svg width="24" height="24" viewBox="2 2.700 15.300 15.300" fill="currentColor" aria-hidden="true">
      <path d="M17.293 13.293A8 8 0 016.707 2.707a8.001 8.001 0 1010.586 10.586z" />
    </svg>
  );
}

const orders = [
  ["LJBD754", "ANZELJ TRANSPORT D.O.O.", "13565", "1", [["2", "08/11 ANSFELDEN"]]],
  ["IS48BAS", "BAS EST SRL", "13556", "1..11", [["12", "08/11 WIEN"], ["13", "08/11 WIEN"], ["14", "08/11 WIEN"], ["15..16", "08/11 INZERSDORF"], ["17..19", "08/11 WIEN"], ["20..21", "08/11 WIEN"], ["22", "08/11 GUNTRAMSDORF"]]],
  ["IS80KFR", "BAS EST SRL", "13558", "1..4", [["5", "08/11 KECKEMET"], ["6", "09/11 VESPREM"], ["7", "09/11 VESPREM"], ["8", "09/11 ALSONEMEDI"]]],
  ["XA470BB", "BAS EST SRL", "13568", "1..7", [["8..10", "08/11 STAMS"], ["11..13", "08/11 HALLEIN"], ["14", "08/11 HALLEIN"]]],
  ["LJ15KEU", "BJ TEAM D.O.O.", "13562", "1..4", [["5", "08/11 KALSDORF BEI GRAZ"], ["6..7", "08/11 KALSDORF BEI GRAZ"], ["8", "08/11 GRAZ"]]],
  ["XA937NK", "BRINA TRASPORTI SRL", "13569", "1..6", [["7", "08/11 HALL IN TIROL"], ["8", "08/11 STAMS"], ["9", "08/11 STAMS"], ["10..12", "08/11 LAUTERACH"]]],
  ["XA459JJ", "BRINA TRASPORTI SRL", "13557", "1..4", []],
];

function OrdersPanel() {
  return (
    <Orders>
      <OrdersHead>
        Ordini
        <IconButton aria-label="Chiudi ordini" $color={ink} $size={16}><FaArrowCircleRight size={15} /></IconButton>
      </OrdersHead>
      <OrdersBody>
        <OrderList>
          {orders.map(([plate, company, trip, done, stops]) => (
            <Order key={plate}>
              <OrderTitle><Plate>{plate}</Plate><span>{company}</span></OrderTitle>
              <Trip>viaggio {trip}</Trip>
              <Stop $done>
                <StopNumber>{done}</StopNumber>
                <StopPlace $done>07/11 VILLAFONTANA DI OPPEANO</StopPlace>
              </Stop>
              {stops.map(([n, place]) => (
                <Stop key={n} $late={place.startsWith("09")}>
                  <StopNumber>{n}</StopNumber>
                  <StopPlace>{place}</StopPlace>
                </Stop>
              ))}
            </Order>
          ))}
        </OrderList>
        <ScrollTrack>
          <ScrollArrow />
          <ScrollThumb />
          <ScrollArrow $down />
        </ScrollTrack>
      </OrdersBody>
    </Orders>
  );
}

function ClearAndOpen({ what }) {
  return (
    <>
      <IconButton aria-label={`Svuota ${what}`} $color="#c4c4c4"><Stroke d={crossPath} size={10} /></IconButton>
      <Divider />
      <IconButton aria-label={`Apri ${what}`} $color="#c4c4c4"><Stroke d="M2 4L6 8L10 4" /></IconButton>
    </>
  );
}

function FleetApp() {
  return (
    <AppFrame>
      <Sidebar>
        <SideLogo><Logotype light /></SideLogo>
        <SideLink href="#map" $active><FaMapMarkedAlt size={12} />Map</SideLink>
        <SideLink href="#veicoli"><FaTruck size={12} />Veicoli</SideLink>
        <SideLink href="#impostazioni" $last><FiSettings size={12} />Impostazioni</SideLink>
      </Sidebar>
      <Main>
        <TopBar>
          <SearchBox>
            <FiSearch size={13} />
            <SearchInput type="text" placeholder="Cerca ..." aria-label="Cerca" />
            <Keys><Key>ctrl</Key>+<Key>K</Key></Keys>
          </SearchBox>
          <UserTools>
            <ChatButton aria-label="Messaggi" $size={26} $color={ink}><MdChatBubbleOutline size={12} /></ChatButton>
            <Avatar aria-label="Profilo">
              <svg width="26" height="26" viewBox="0 0 26 26" aria-hidden="true">
                <circle cx="13" cy="13" r="13" fill="#a0aebb" />
                <circle cx="13" cy="10" r="5" fill="#fff" />
                <path d="M4 22Q6 16 13 16Q20 16 22 22Q13 29 4 22Z" fill="#fff" />
              </svg>
              <Status />
            </Avatar>
          </UserTools>
        </TopBar>
        <Filters>
          <DatePicker>
            <DateLabel htmlFor="day">data</DateLabel>
            <IconButton aria-label="Giorno precedente" $color="#3ba5c9"><Stroke d="M8 2L4 6L8 10" /></IconButton>
            <DateInput id="day" type="text" defaultValue="08/11/2021" />
            <BsCalendar3 size={14} />
            <IconButton aria-label="Giorno successivo" $color="#3ba5c9"><Stroke d="M4 2L8 6L4 10" /></IconButton>
          </DatePicker>
          <Selection>
            <Tags>
              {["EF", "MM", "SB"].map((t) => (
                <Tag key={t}>{t}<IconButton aria-label={`Rimuovi ${t}`} $size={10} $color={ink}><Stroke d={crossPath} size={8} /></IconButton></Tag>
              ))}
            </Tags>
            <ClearAndOpen what="operatori" />
            <ExportSelect aria-label="Tipo" defaultValue="export">
              <option value="export">export</option>
            </ExportSelect>
            <ClearAndOpen what="tipo" />
          </Selection>
        </Filters>
        <Workspace>
          <MapPanel>
            <MapTerrain />
            {coveredMarkers.map(([x, y]) => (
              <Marker key={`${x}-${y}`} $x={x} $y={y}><PinShape /></Marker>
            ))}
            {markerLabels.map(([text, x, y]) => (
              <MarkerLabel key={text} $x={x} $y={y}>{text}</MarkerLabel>
            ))}
            {markers.map(([x, y, blue]) => (
              <Marker key={`${x}-${y}`} $x={x} $y={y} $blue={blue}><PinShape /></Marker>
            ))}
            <PlacesToggle><Tick type="checkbox" defaultChecked />luoghi</PlacesToggle>
            <MapButton aria-label="Veicoli" $solid $size={26} $right={3}><FaTruck size={15} /></MapButton>
            <MapButton aria-label="Satellite" $size={32} $right={48} $bottom={22}><MdSatellite size={24} /></MapButton>
            <MapButton aria-label="Traffico" $size={32} $right={9} $bottom={22}><FaTrafficLight size={20} /></MapButton>
            <GoogleMark>Google</GoogleMark>
            <MapCredits>
              <span>Scorciatoie da tastiera</span>
              <span>Dati mappa ©2021 GeoBasis-DE/BKG (©2009), Google</span>
              <span>Termini e condizioni d'uso</span>
            </MapCredits>
          </MapPanel>
          <OrdersPanel />
        </Workspace>
      </Main>
      <Pointer width="27" height="42" viewBox="0 0 27 42" aria-hidden="true">
        <path d="M1.500 1.500L26 26H16L18.500 37L14 39L9 27L1.500 34.500Z" fill="#fff" stroke="#000" strokeWidth="1" />
      </Pointer>
    </AppFrame>
  );
}

const features = [
  [FaTruck, "Veicoli", "Gestione veicoli e flotta personalizzata per ogni utente. Abbinamento motrici e rimorchi in automatico."],
  [FaMapMarkedAlt, "Localizzazione", "Monitora la posizione dei veicoli."],
  [FaRoute, "Viaggi", "Viaggi e itinerari integrati."],
];

export default function App() {
  return (
    <Page>
      <GlobalStyle />
      <Header>
        <Brand href="#home"><Emblem /><Logotype /></Brand>
        <IconButton aria-label="Tema scuro" $size={24}><Moon /></IconButton>
      </Header>
      <main>
        <Hero>
          <Pitch>
            <Title>Sistema <Accent>interno</Accent> di<br />gestione flotta</Title>
            <Lead>
              Diamo la possibilità ai nostri clienti e disponenti<br />
              di gestire i viaggi e condividere le informazioni<br />
              in tempo reale
            </Lead>
            <LoginButton>Accedi</LoginButton>
          </Pitch>
          <Shot><FleetApp /></Shot>
        </Hero>
        <Features>
          {features.map(([Icon, title, text]) => (
            <Card key={title}>
              <Icon size={45} />
              <div>
                <CardTitle>{title}</CardTitle>
                <CardText>{text}</CardText>
              </div>
            </Card>
          ))}
        </Features>
      </main>
      <Footer>
        <span>contattaci</span>
        <MdEmail size={24} color="#7cc8e8" />
        <a href="#villatrans">@villatrans</a>
      </Footer>
    </Page>
  );
}
